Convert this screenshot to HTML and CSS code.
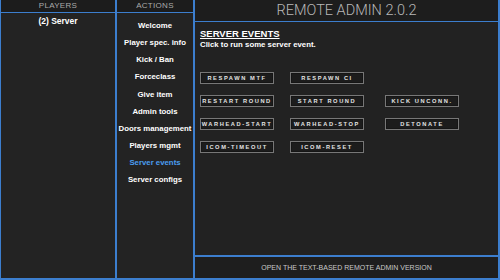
FILE: index.html
```html
<!DOCTYPE html>
<html>
	<head>
		<meta charset="utf-8" />
		<title>Remote Admin</title>
		<link rel="stylesheet" href="styles.css">
	</head>
	<body>
		<div class="ra">
			<div class="col players">
				<div class="col-head">PLAYERS</div>
				<ul class="list">
					<li>(2) Server</li>
				</ul>
			</div>
			<div class="col actions">
				<div class="col-head">ACTIONS</div>
				<ul class="menu">
					<li>Welcome</li>
					<li>Player spec. info</li>
					<li>Kick / Ban</li>
					<li>Forceclass</li>
					<li>Give item</li>
					<li>Admin tools</li>
					<li>Doors management</li>
					<li>Players mgmt</li>
					<li class="active">Server events</li>
					<li>Server configs</li>
				</ul>
			</div>
			<div class="main">
				<div class="title">REMOTE ADMIN 2.0.2</div>
				<div class="content">
					<h2>SERVER EVENTS</h2>
					<p>Click to run some server event.</p>
					<div class="events">
						<button type="button">RESPAWN MTF</button>
						<button type="button">RESPAWN CI</button>
						<span></span>
						<button type="button">RESTART ROUND</button>
						<button type="button">START ROUND</button>
						<button type="button">KICK UNCONN.</button>
						<button type="button">WARHEAD-START</button>
						<button type="button">WARHEAD-STOP</button>
						<button type="button">DETONATE</button>
						<button type="button">ICOM-TIMEOUT</button>
						<button type="button">ICOM-RESET</button>
					</div>
				</div>
				<div class="footer">OPEN THE TEXT-BASED REMOTE ADMIN VERSION</div>
			</div>
		</div>
	</body>
</html>
```
FILE: styles.css
```css
html,
body {
	margin: 0;
	padding: 0;
	background: #222;
	font-family: "Liberation Sans", Arial, sans-serif;
	color: #fff;
}
.ra {
	display: flex;
	height: 280px;
	width: 500px;
}
.col {
	display: flex;
	flex-direction: column;
	border: 1px solid #3c7ece;
	border-top: 0;
	border-bottom-width: 2px;
	background: #232323;
}
.players {
	width: 114px;
}
.actions {
	width: 76px;
}
.col-head {
	height: 12px;
	line-height: 12px;
	border-bottom: 1px solid #3c7ece;
	background: #1c1c1c;
	color: #aaa;
	font-size: 8px;
	text-align: center;
	letter-spacing: 0.3px;
}
.list,
.menu {
	list-style: none;
	margin: 0;
	padding: 0;
	text-align: center;
	font-weight: bold;
}
.list li {
	font-size: 8.5px;
	padding-top: 3px;
}
.menu {
	padding-top: 4px;
}
.menu li {
	font-size: 7.8px;
	height: 17.15px;
	line-height: 17.15px;
	white-space: nowrap;
}
.menu .active {
	color: #4b9ef0;
}
.main {
	flex: 1;
	display: flex;
	flex-direction: column;
	border: 1px solid #3c7ece;
	border-top: 0;
	border-right-width: 2px;
	border-bottom-width: 2px;
}
.title {
	height: 21px;
	line-height: 22px;
	border-bottom: 1px solid #3c7ece;
	background: #1d1d1d;
	color: #b8b8b8;
	font-family: Roboto, sans-serif;
	font-weight: 300;
	font-size: 14.5px;
	text-align: center;
}
.content {
	flex: 1;
	padding: 6px 5px 0;
	border-bottom: 2px solid #3c7ece;
}
.content h2 {
	margin: 0;
	font-size: 9.5px;
	text-decoration: underline;
	line-height: 11px;
}
.content p {
	margin: 0;
	font-size: 7.8px;
	font-weight: bold;
	line-height: 11px;
}
.events {
	display: grid;
	grid-template-columns: 90px 95px 74px;
	row-gap: 11px;
	margin-top: 22px;
}
.events button {
	width: 74px;
	height: 12px;
	padding: 0;
	border: 1px solid #777;
	box-shadow: inset 0 0 0 1px #151515;
	background: #1c1c1c;
	color: #e4e4e4;
	font-family: "Liberation Sans", Arial, sans-serif;
	font-weight: bold;
	font-size: 5.7px;
	letter-spacing: 1.6px;
	line-height: 10px;
	white-space: nowrap;
}
.footer {
	height: 21px;
	line-height: 21px;
	background: #1e1e1e;
	color: #c8c8c8;
	font-size: 7px;
	text-align: center;
}
```
